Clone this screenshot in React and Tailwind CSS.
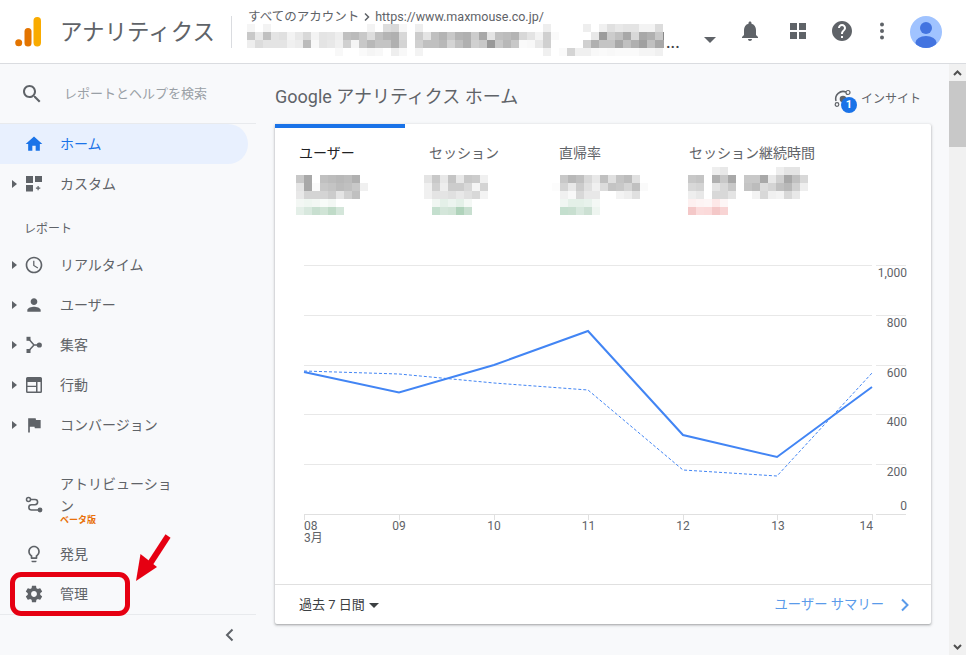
import React from "react";

const FONT = "font-['Roboto','Noto_Sans_CJK_JP',sans-serif]";

function Mosaic({ rows, className = "" }) {
  const cols = Math.max(...rows.map((r) => r.split(" ").length));
  return (
    <svg width={cols * 8} height={rows.length * 8} className={className} shapeRendering="crispEdges" aria-hidden="true">
      {rows.map((r, y) =>
        r.split(" ").map((c, x) => {
          if (c === ".") return null;
          const fill = c.length === 2 ? `#${c}${c}${c}` : `#${c}`;
          return <rect key={`${x}-${y}`} x={x * 8} y={y * 8} width="8" height="8" fill={fill} />;
        })
      )}
    </svg>
  );
}

const headerMosaic = [
  "f5 . f3 . . . . . . . . . . . . f3 . dd d8 f7 . ee . . . . . . . . . . . . . . . ee . . . . ee . f0 e0 e8 e4 e4 f3 f3 dc",
  "c8 e8 c0 e4 e0 f3 e8 d8 f3 e4 e6 ee c0 bb c8 dd c0 b4 b0 d8 . cc e4 c0 b4 c8 b4 b0 cc a8 e4 c0 bc b4 d8 e4 f3 d0 fa . . . . e8 9c cc c0 a8 d8 a8 b0 c8 88 c8 f0",
  "ee dc e4 e4 e4 f0 ec bb f8 e4 e8 f0 d0 f5 c8 b8 c4 c4 b0 d4 . d0 c0 c0 b8 d4 c0 b0 d0 c8 98 c8 b8 c8 fa f8 e8 d0 . . . . d0 b0 c4 c4 a8 c0 b0 a0 c0 a8 a8 e0",
  ". . . . . . . . . . . f8 . . fa f5 f8 . ee f8 . f3 . . . . . . . . . . . . . . . f0 . fa d4 f0 f0 f8 fa f8 fa fa fa f5 f5 f0",
];

const metrics = [
  {
    label: "ユーザー",
    active: true,
    shift: "ml-[-3px]",
    rows: [
      ".",
      "c8 a8 . c0 bc b8 bc b0 .",
      "e4 a8 fa c8 c4 bc c0 c8 f0",
      "e8 d4 d4 d4 cc e4 d0 c0 .",
      "f3f7f4 eff6f1 f3f7f4 f8fbf9 f3f7f4 . . . .",
      "e4efe8 d8e8de c8dfd0 d0e4d6 c0dbc8 d4e6da . . .",
    ],
  },
  {
    label: "セッション",
    shift: "ml-[-5px]",
    rows: [
      ".",
      "e4 c8 e8 c4 e8 c8 cc f0 .",
      "f0 d0 ee cc cc d8 f5 d4 .",
      "f0 e4 e4 e0 e8 e0 d8 f3 .",
      ". f0f6f2 e4f0e8 ecf4ef e4f0e8 f4f8f5 . . .",
      ". c4dfce d4e6da d0e4d6 b0d3bb c8dfd0 . . .",
    ],
  },
  {
    label: "直帰率",
    shift: "ml-[-7px]",
    rows: [
      ".",
      ". c8 b8 c0 d8 e8 c0 e0 c4 bc e0 .",
      "fc d4 e8 cc e0 f0 dc c4 c8 d4 c0 fa",
      ". f0 f8 d8 e8 e8 . . f3 ee e0 .",
      ". f0f6f2 e4f0e8 e4f0e8 e8f2ec f4f8f5 . . . . . .",
      ". c4dfce c8dfd0 d8e8de cce0d3 eef5f0 . . . . . .",
    ],
  },
  {
    label: "セッション継続時間",
    shift: "ml-[-1px]",
    rows: [
      ". . . ee e8 . . . . . . ee e4 e4 .",
      "c8 c4 . b0 c8 a8 . c8 c8 a8 e8 d0 a8 c0 d8",
      "d8 d4 . e4 d8 c8 . c4 bc dc d4 c0 b8 d0 ee",
      "ee e8 . d8 d8 e4 . . f3 d8 f0 f3 d8 e8 .",
      "fdf0f0 fdf4f4 fdf6f6 fde8e8 fdf6f6 . . . . . . . . . .",
      "f4c8c8 fbdcdc fbdada f4c8c8 f8d4d4 . . . . . . . . . .",
    ],
  },
];

const I = ({ children, className = "", size = 20, vb = "0 0 24 24" }) => (
  <svg width={size} height={size} viewBox={vb} fill="currentColor" className={`flex-none ${className}`} aria-hidden="true">
    {children}
  </svg>
);

const paths = {
  home: "M10 20v-6h4v6h5v-8h3L12 3 2 12h3v8z",
  clock:
    "M11.99 2C6.47 2 2 6.48 2 12s4.47 10 9.99 10C17.52 22 22 17.52 22 12S17.52 2 11.99 2zM12 20c-4.42 0-8-3.58-8-8s3.58-8 8-8 8 3.58 8 8-3.58 8-8 8zm.5-13H11v6l5.25 3.15.75-1.23-4.5-2.67z",
  person: "M12 12c2.21 0 4-1.79 4-4s-1.79-4-4-4-4 1.79-4 4 1.79 4 4 4zm0 2c-2.67 0-8 1.34-8 4v2h16v-2c0-2.66-5.33-4-8-4z",
  flag: "M14.4 6L14 4H5v17h2v-7h5.6l.4 2h7V6z",
  bulb:
    "M9 21c0 .55.45 1 1 1h4c.55 0 1-.45 1-1v-1H9v1zm3-19C8.14 2 5 5.14 5 9c0 2.38 1.19 4.47 3 5.74V17c0 .55.45 1 1 1h6c.55 0 1-.45 1-1v-2.26c1.81-1.27 3-3.36 3-5.74 0-3.86-3.14-7-7-7zm2.85 11.1l-.85.6V16h-4v-2.3l-.85-.6C7.8 12.16 7 10.63 7 9c0-2.76 2.24-5 5-5s5 2.24 5 5c0 1.63-.8 3.16-2.15 4.1z",
  gear:
    "M19.43 12.98c.04-.32.07-.64.07-.98s-.03-.66-.07-.98l2.11-1.65c.19-.15.24-.42.12-.64l-2-3.46c-.12-.22-.39-.3-.61-.22l-2.49 1c-.52-.4-1.08-.73-1.69-.98l-.38-2.65C14.46 2.18 14.25 2 14 2h-4c-.25 0-.46.18-.49.42l-.38 2.65c-.61.25-1.17.59-1.69.98l-2.49-1c-.23-.09-.49 0-.61.22l-2 3.46c-.13.22-.07.49.12.64l2.11 1.65c-.04.32-.07.65-.07.98s.03.66.07.98l-2.11 1.65c-.19.15-.24.42-.12.64l2 3.46c.12.22.39.3.61.22l2.49-1c.52.4 1.08.73 1.69.98l.38 2.65c.03.24.24.42.49.42h4c.25 0 .46-.18.49-.42l.38-2.65c.61-.25 1.17-.59 1.69-.98l2.49 1c.23.09.49 0 .61-.22l2-3.46c.12-.22.07-.49-.12-.64l-2.11-1.65zM12 15.5c-1.93 0-3.5-1.57-3.5-3.5s1.57-3.5 3.5-3.5 3.5 1.57 3.5 3.5-1.57 3.5-3.5 3.5z",
  search:
    "M15.5 14h-.79l-.28-.27C15.41 12.59 16 11.11 16 9.5 16 5.91 13.09 3 9.5 3S3 5.91 3 9.5 5.91 16 9.5 16c1.61 0 3.09-.59 4.23-1.57l.27.28v.79l5 4.99L20.49 19l-4.99-5zm-6 0C7.01 14 5 11.99 5 9.5S7.01 5 9.5 5 14 7.01 14 9.5 11.99 14 9.5 14z",
  bell:
    "M12 22c1.1 0 2-.9 2-2h-4c0 1.1.89 2 2 2zm6-6v-5c0-3.07-1.64-5.64-4.5-6.32V4c0-.83-.67-1.5-1.5-1.5s-1.5.67-1.5 1.5v.68C7.63 5.36 6 7.92 6 11v5l-2 2v1h16v-1l-2-2z",
  help:
    "M12 2C6.48 2 2 6.48 2 12s4.48 10 10 10 10-4.48 10-10S17.52 2 12 2zm1 17h-2v-2h2v2zm2.07-7.75l-.9.92C13.45 12.9 13 13.5 13 15h-2v-.5c0-1.1.45-2.1 1.17-2.83l1.24-1.26c.37-.36.59-.86.59-1.41 0-1.1-.9-2-2-2s-2 .9-2 2H8c0-2.21 1.79-4 4-4s4 1.79 4 4c0 .88-.36 1.68-.93 2.25z",
};

const Custom = () => (
  <I vb="0 0 20 20">
    <rect x="2" y="2" width="7" height="7" />
    <rect x="11" y="2" width="7" height="6" />
    <rect x="2" y="11" width="7" height="6.5" />
    <path d="M13.5 12h1.2v1.6h1.6v1.1h-1.6v1.6h-1.2v-1.6h-1.6v-1.1h1.6z" />
  </I>
);
const Acq = () => (
  <I vb="0 0 20 20">
    <rect x="2.5" y="1.8" width="4" height="4" />
    <rect x="2.5" y="14" width="4" height="4" />
    <circle cx="15.3" cy="10" r="2.6" />
    <path d="M4.5 3.8L10 10H15M4.5 16L10 10" fill="none" stroke="currentColor" strokeWidth="1.5" />
  </I>
);
const Behavior = () => (
  <I vb="0 0 20 20">
    <path
      fillRule="evenodd"
      d="M3.5 2h13A1.5 1.5 0 0 1 18 3.5v13a1.5 1.5 0 0 1-1.5 1.5h-13A1.5 1.5 0 0 1 2 16.5v-13A1.5 1.5 0 0 1 3.5 2zM3.5 7v9.5H12V12H3.500v-1.2H12V7zm10 0v9.5h3V7z"
    />
  </I>
);
const Attr = () => (
  <I vb="0 0 20 20">
    <circle cx="4.5" cy="4.5" r="2" fill="none" stroke="currentColor" strokeWidth="1.5" />
    <circle cx="16" cy="15" r="2.4" />
    <path d="M6.5 4.500H11a2.6 2.6 0 0 1 0 5.2H7.5a2.6 2.6 0 0 0 0 5.3H14" fill="none" stroke="currentColor" strokeWidth="1.6" />
  </I>
);
const P = ({ d, size, className }) => (
  <I size={size} className={className}>
    <path d={d} />
  </I>
);

function Item({ icon, label, caret = true, active = false }) {
  return (
    <div
      className={`flex h-[40px] items-center pl-[12px] text-[14px] ${
        active ? "mr-[8px] rounded-r-full bg-[#e8f0fe] text-[#1a73e8]" : "text-[#5f6368]"
      }`}
    >
      <span className="flex w-[12px] flex-none items-center">
        {caret && <span className="h-0 w-0 border-y-[4px] border-l-[5px] border-y-transparent border-l-[#5f6368]" />}
      </span>
      {icon}
      <span className="ml-[16px]">{label}</span>
    </div>
  );
}

function Header() {
  return (
    <header className="flex h-[64px] flex-none items-center border-b border-[#dadce0] bg-white text-[#5f6368]">
      <svg width="60" height="60" viewBox="0 0 60 60" className="mb-[4px] flex-none" aria-label="Google Analytics">
        <circle cx="18.7" cy="42.7" r="3.5" fill="#e37400" />
        <rect x="24.5" y="28" width="7" height="18.5" rx="3.5" fill="#e37400" />
        <rect x="33.5" y="17" width="7.5" height="29.5" rx="3.7" fill="#f9ab00" />
      </svg>
      <div className="w-[172px] flex-none border-r border-[#dadce0] text-[22.5px] leading-[32px]">アナリティクス</div>
      <div className="ml-[16px] mt-[8px] flex w-[432px] flex-none flex-col self-start">
        <div className="flex h-[18px] items-center text-[12.5px] leading-[18px]">
          すべてのアカウント
          <svg width="10" height="10" viewBox="0 0 10 10" className="mx-[3px]" aria-hidden="true">
            <path d="M3 1.5L6.5 5L3 8.5" fill="none" stroke="currentColor" strokeWidth="1.5" />
          </svg>
          https://www.maxmouse.co.jp/
        </div>
        <div className="ml-[-1px] mt-[-2px] flex items-end">
          <Mosaic rows={headerMosaic} />
          <span className="mb-[6px] ml-[2px] text-[14px] font-bold leading-[14px] tracking-[0.5px] text-[#3c4043]">...</span>
        </div>
      </div>
      <span className="ml-[24px] mt-[16px] h-0 w-0 flex-none border-x-[6px] border-t-[6px] border-x-transparent border-t-[#5f6368]" />
      <div className="mb-[2px] ml-[22px] flex items-center">
        <P d={paths.bell} size={24} />
        <svg width="24" height="24" viewBox="0 0 24 24" fill="currentColor" className="ml-[24px]" aria-hidden="true">
          <rect x="4" y="4" width="7" height="7" />
          <rect x="13" y="4" width="7" height="7" />
          <rect x="4" y="13" width="7" height="7" />
          <rect x="13" y="13" width="7" height="7" />
        </svg>
        <P d={paths.help} size={24} className="ml-[20px]" />
        <svg width="24" height="24" viewBox="0 0 24 24" fill="currentColor" className="ml-[16px]" aria-hidden="true">
          <circle cx="12" cy="5.5" r="2" />
          <circle cx="12" cy="12" r="2" />
          <circle cx="12" cy="18.5" r="2" />
        </svg>
        <svg width="32" height="32" viewBox="0 0 32 32" className="ml-[16px] mt-[2px]" aria-label="account">
          <clipPath id="av">
            <circle cx="16" cy="16" r="16" />
          </clipPath>
          <circle cx="16" cy="16" r="16" fill="#a0c3ff" />
          <g clipPath="url(#av)" fill="#4374e0">
            <circle cx="16" cy="12" r="6" />
            <ellipse cx="16" cy="26.5" rx="10.5" ry="6.5" />
          </g>
        </svg>
      </div>
    </header>
  );
}

function Sidebar() {
  return (
    <aside className="flex w-[256px] flex-none flex-col">
      <div className="flex h-[60px] flex-none items-center border-b border-[#e8eaed] pl-[20px] text-[#5f6368]">
        <P d={paths.search} size={24} />
        <span className="ml-[20px] text-[13px] text-[#9aa0a6]">レポートとヘルプを検索</span>
      </div>
      <Item active caret={false} icon={<P d={paths.home} />} label="ホーム" />
      <Item icon={<Custom />} label="カスタム" />
      <div className="h-[41px] flex-none pl-[24px] pt-[17px] text-[12px] leading-[16px] text-[#5f6368]">レポート</div>
      <Item icon={<P d={paths.clock} />} label="リアルタイム" />
      <Item icon={<P d={paths.person} />} label="ユーザー" />
      <Item icon={<Acq />} label="集客" />
      <Item icon={<Behavior />} label="行動" />
      <Item icon={<P d={paths.flag} />} label="コンバージョン" />
      <div className="mt-[24px] flex h-[65px] flex-none items-center pl-[24px] text-[#5f6368]">
        <span className="mt-[7px]"><Attr /></span>
        <div className="ml-[16px] mt-[4px] flex w-[116px] flex-col self-start">
          <span className="text-[14px] leading-[22px]">アトリビューション</span>
          <span className="mt-[-3px] text-[9px] font-bold leading-[12px] text-[#e8710a]">ベータ版</span>
        </div>
      </div>
      <Item caret={false} icon={<P d={paths.bulb} />} label="発見" />
      <Item caret={false} icon={<P d={paths.gear} />} label="管理" />
      <div className="flex flex-1 items-center border-t border-[#e8eaed] pl-[222px] text-[#5f6368]">
        <svg width="16" height="16" viewBox="0 0 16 16" aria-hidden="true">
          <path d="M10.5 2.5L5 8l5.5 5.5" fill="none" stroke="currentColor" strokeWidth="2" />
        </svg>
      </div>
    </aside>
  );
}

function Chart() {
  const grid = [265, 315, 365, 414, 464, 514];
  const ticks = [304, 399, 494, 588.5, 683, 777, 872];
  const yLabels = [
    ["1,000", 277],
    ["800", 327],
    ["600", 377],
    ["400", 426],
    ["200", 476],
    ["0", 510],
  ];
  const xLabels = [
    ["09", 399],
    ["10", 494],
    ["11", 588.5],
    ["12", 683],
    ["13", 778],
  ];
  return (
    <svg width="656" height="356" viewBox="275 228 656 356" className="block flex-none" style={{ fontFamily: "Roboto, sans-serif" }}>
      {grid.map((y) => (
        <g key={y} stroke={y === 514 ? "#e0e0e0" : "#e8e8e8"} strokeWidth="1" shapeRendering="crispEdges">
          <line x1="304" x2="872" y1={y + 0.5} y2={y + 0.5} />
          <line x1="876" x2="906" y1={y + 0.5} y2={y + 0.5} />
        </g>
      ))}
      {ticks.map((x) => (
        <line key={x} x1={x} x2={x} y1="514" y2="520" stroke="#e0e0e0" shapeRendering="crispEdges" />
      ))}
      <polyline
        points="304,371 399,374 494,383 588,390 683,470 777,476 872,373"
        fill="none"
        stroke="#4285f4"
        strokeWidth="1"
        strokeDasharray="3 2"
      />
      <polyline
        points="304,372 399,392.5 494,365 588,331 683,435 777,457 872,387"
        fill="none"
        stroke="#4285f4"
        strokeWidth="2"
      />
      <g fontSize="12" fill="#5f6368">
        {yLabels.map(([t, y]) => (
          <text key={t} x="907" y={y} textAnchor="end">
            {t}
          </text>
        ))}
        <text x="304" y="530">08</text>
        <text x="304" y="542" style={{ fontFamily: "Roboto, 'Noto Sans CJK JP', sans-serif" }}>3月</text>
        {xLabels.map(([t, x]) => (
          <text key={t} x={x} y="530" textAnchor="middle">
            {t}
          </text>
        ))}
        <text x="873" y="530" textAnchor="end">14</text>
      </g>
    </svg>
  );
}

function Main() {
  return (
    <main className="flex min-w-0 flex-1 flex-col pl-[19px] pr-[18px]">
      <div className="flex h-[60px] flex-none items-center justify-between pr-[10px]">
        <h1 className="mt-[4px] text-[18px] font-normal text-[#5f6368]">Google アナリティクス ホーム</h1>
        <div className="mt-[9px] flex items-center text-[12px] text-[#5f6368]">
          <span className="relative mr-[8px] h-[20px] w-[20px]">
            <svg width="20" height="20" viewBox="0 0 20 20" fill="none" stroke="currentColor" aria-hidden="true">
              <path d="M3 12A7.5 7.5 0 0 1 13 3" strokeWidth="1.5" />
              <circle cx="10" cy="10" r="3.3" fill="currentColor" stroke="none" />
              <circle cx="15" cy="3.5" r="2" strokeWidth="1.2" />
              <circle cx="4" cy="15.5" r="1.8" strokeWidth="1.2" />
            </svg>
            <span className="absolute left-[8px] top-[8px] flex h-[16px] w-[16px] items-center justify-center rounded-full bg-[#1a73e8] text-[11px] font-bold leading-none text-white">
              1
            </span>
          </span>
          インサイト
        </div>
      </div>
      <section className="flex h-[500px] w-[656px] flex-none flex-col rounded-[2px] bg-white shadow-[0_1px_2px_0_rgba(60,64,67,0.35),0_1px_3px_1px_rgba(60,64,67,0.12)]">
        <div className="h-[4px] w-[130px] flex-none bg-[#1a73e8]" />
        <div className="flex h-[100px] flex-none pl-[24px] pt-[15px]">
          {metrics.map((m) => (
            <div key={m.label} className="w-[130px] flex-none">
              <div className={`text-[14px] leading-[20px] ${m.active ? "text-[#202124]" : "text-[#5f6368]"}`}>{m.label}</div>
              <Mosaic rows={m.rows} className={`mt-[4px] ${m.shift}`} />
            </div>
          ))}
        </div>
        <Chart />
        <div className="flex h-[40px] flex-1 items-center justify-between border-t border-[#e0e0e0] pl-[24px] pr-[20px]">
          <div className="flex items-center text-[13px] text-[#3c4043]">
            過去 7 日間
            <span className="ml-[4px] mt-[2px] h-0 w-0 border-x-[5px] border-t-[5px] border-x-transparent border-t-[#3c4043]" />
          </div>
          <div className="flex items-center text-[13.3px] text-[#5a9bea]">
            ユーザー サマリー
            <svg width="12" height="14" viewBox="0 0 12 14" className="ml-[15px]" aria-hidden="true">
              <path d="M3 1.5L8.5 7L3 12.5" fill="none" stroke="currentColor" strokeWidth="2" />
            </svg>
          </div>
        </div>
      </section>
    </main>
  );
}

export default function App() {
  return (
    <div className={`relative flex h-[655px] w-[966px] flex-col overflow-hidden bg-white ${FONT}`}>
      <Header />
      <div className="flex min-h-0 flex-1 bg-[#f8f9fb]">
        <Sidebar />
        <Main />
        <div className="flex w-[17px] flex-none flex-col items-center bg-[#f1f1f1]">
          <div className="flex h-[17px] flex-none items-center justify-center text-[#505050]">
            <svg width="9" height="6" viewBox="0 0 9 6" aria-hidden="true">
              <path d="M1 5l3.5-3.5L8 5" fill="none" stroke="currentColor" strokeWidth="2" />
            </svg>
          </div>
          <div className="h-[66px] w-full flex-none bg-[#c8c8c8]" />
          <div className="flex-1" />
          <div className="flex h-[17px] flex-none items-center justify-center text-[#505050]">
            <svg width="9" height="6" viewBox="0 0 9 6" aria-hidden="true">
              <path d="M1 1l3.5 3.5L8 1" fill="none" stroke="currentColor" strokeWidth="2" />
            </svg>
          </div>
        </div>
      </div>
      <div className="pointer-events-none absolute left-[10px] top-[572px] h-[44px] w-[120px] rounded-[11px] border-[5px] border-[#e60012]" />
      <svg width="40" height="52" viewBox="0 0 40 52" className="pointer-events-none absolute left-[132px] top-[534px]" aria-hidden="true">
        <path d="M36 2L16.5 32" stroke="#e60012" strokeWidth="6" fill="none" />
        <path d="M4 47L8.5 20L25 33z" fill="#e60012" />
      </svg>
    </div>
  );
}
